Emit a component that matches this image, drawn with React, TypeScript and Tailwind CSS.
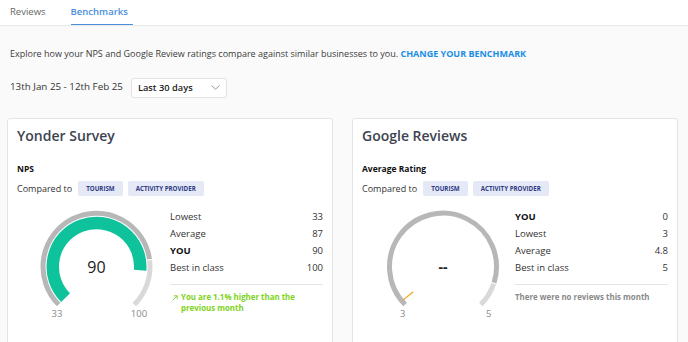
import React from 'react';

type Row = { label: string; value: string; bold?: boolean };

const polar = (cx: number, cy: number, r: number, a: number) => {
  const rad = (a * Math.PI) / 180;
  return [cx + r * Math.cos(rad), cy - r * Math.sin(rad)];
};

// clockwise arc from angle a1 down to a2 (degrees, 0 = right, counter-clockwise positive)
const arc = (cx: number, cy: number, r: number, a1: number, a2: number) => {
  const [x1, y1] = polar(cx, cy, r, a1);
  const [x2, y2] = polar(cx, cy, r, a2);
  const large = a1 - a2 > 180 ? 1 : 0;
  return `M ${x1} ${y1} A ${r} ${r} 0 ${large} 1 ${x2} ${y2}`;
};

const START = 225;
const SWEEP = 270;

const Gauge = ({
  cx,
  min,
  max,
  avg,
  value,
  display,
  minX,
  maxX,
}: {
  cx: number;
  min: number;
  max: number;
  avg: number;
  value: number | null;
  display: string;
  minX: number;
  maxX: number;
}) => {
  const cy = 58.7;
  const angle = (v: number) => START - ((v - min) / (max - min)) * SWEEP;
  const avgA = angle(avg);
  return (
    <svg width="143" height="114" viewBox="0 0 143 114" className="block">
      <path d={arc(cx, cy, 53.5, START, avgA + 0.6)} fill="none" stroke="#b7b7b7" strokeWidth="5" />
      <path d={arc(cx, cy, 53.5, avgA - 0.6, START - SWEEP)} fill="none" stroke="#d9d9d9" strokeWidth="5" />
      {value !== null ? (
        <path d={arc(cx, cy, 43.75, START, angle(value))} fill="none" stroke="#0ec39c" strokeWidth="12.5" />
      ) : (
        (() => {
          const [x1, y1] = polar(cx, cy, 39, 220);
          const [x2, y2] = polar(cx, cy, 52, 220);
          return <line x1={x1} y1={y1} x2={x2} y2={y2} stroke="#f5a623" strokeWidth="1.3" />;
        })()
      )}
      <text
        x={cx}
        y={value !== null ? 65 : 64}
        textAnchor="middle"
        fontSize={value !== null ? 16 : 14}
        fontWeight={value !== null ? 400 : 700}
        fill="#222"
        fontFamily="'Open Sans', sans-serif"
      >
        {display}
      </text>
      <text x={minX} y={108.5} textAnchor="middle" fontSize="9.5" fill="#8a8a8a" fontFamily="'Open Sans', sans-serif">
        {min}
      </text>
      <text x={maxX} y={108.5} textAnchor="middle" fontSize="9.5" fill="#8a8a8a" fontFamily="'Open Sans', sans-serif">
        {max}
      </text>
    </svg>
  );
};

const Tag = ({ children }: { children: React.ReactNode }) => (
  <span className="h-[15px] px-[8px] flex items-center rounded-[2px] bg-[#e5e8f5] text-[6.2px] font-bold text-[#2e3b86]">
    {children}
  </span>
);

const Stats = ({ rows, footer }: { rows: Row[]; footer: React.ReactNode }) => (
  <div className="w-[153px] ml-[10px]">
    {rows.map((r) => (
      <div key={r.label} className="flex justify-between text-[9.5px] leading-[17px] text-[#333]">
        <span className={r.bold ? 'font-bold text-[#111]' : ''}>{r.label}</span>
        <span>{r.value}</span>
      </div>
    ))}
    <div className="mt-[8px] border-t border-[#e3e5ea]" />
    <div className="mt-[7px]">{footer}</div>
  </div>
);

const Card = ({
  title,
  metric,
  gauge,
  rows,
  footer,
}: {
  title: string;
  metric: string;
  gauge: React.ReactNode;
  rows: Row[];
  footer: React.ReactNode;
}) => (
  <div className="w-[326px] h-[240px] bg-white border border-[#e4e4e4] rounded-[3px] px-[9px] pt-[9px]">
    <div className="text-[14px] leading-[16px] font-semibold text-[#3d4350]">{title}</div>
    <div className="mt-[20px] text-[8.5px] leading-[10px] font-bold text-[#111]">{metric}</div>
    <div className="mt-[7px] flex items-center gap-[5px] h-[15px]">
      <span className="text-[9px] text-[#333] mr-[1px]">Compared to</span>
      <Tag>TOURISM</Tag>
      <Tag>ACTIVITY PROVIDER</Tag>
    </div>
    <div className="mt-[12px] flex">
      <div className="w-[143px]">{gauge}</div>
      <Stats rows={rows} footer={footer} />
    </div>
  </div>
);

const App = () => {
  return (
    <div className="w-[688px] h-[342px] overflow-hidden bg-[#fafafa] font-['Open_Sans',sans-serif]">
      {/* Tabs */}
      <div className="h-[26px] bg-white border-b border-[#e8e8e8] flex items-end pl-[10px]">
        <div className="h-[25px] flex items-center text-[9.5px] text-[#666]">Reviews</div>
        <div className="ml-[25px] h-[25px] pr-[5px] flex items-center text-[9.5px] font-semibold text-[#4a8fdc] border-b border-[#4a8fdc]">
          Benchmarks
        </div>
      </div>

      <div className="pl-[10px] pt-[22px] text-[9px] leading-[12px] text-[#3a3a3a]">
        Explore how your NPS and Google Review ratings compare against similar businesses to you.{' '}
        <span className="font-bold text-[#1a8ee6]">CHANGE YOUR BENCHMARK</span>
      </div>

      <div className="mt-[17.5px] pl-[10px] flex items-center h-[20px]">
        <span className="text-[9.8px] text-[#333]">13th Jan 25 - 12th Feb 25</span>
        <div className="ml-[8px] w-[96px] h-[20px] bg-white border border-[#e2e2e2] rounded-[3px] flex items-center justify-between pl-[6px] pr-[6px]">
          <span className="text-[9.3px] font-semibold text-[#222]">Last 30 days</span>
          <svg width="9" height="5" viewBox="0 0 9 5">
            <polyline points="0.5,0.5 4.5,4.2 8.5,0.5" fill="none" stroke="#8c8c8c" strokeWidth="0.9" />
          </svg>
        </div>
      </div>

      <div className="mt-[20.5px] pl-[7px] flex gap-[19px]">
        <Card
          title="Yonder Survey"
          metric="NPS"
          gauge={<Gauge cx={79.5} min={33} max={100} avg={87} value={90} display="90" minX={40} maxX={122} />}
          rows={[
            { label: 'Lowest', value: '33' },
            { label: 'Average', value: '87' },
            { label: 'YOU', value: '90', bold: true },
            { label: 'Best in class', value: '100' },
          ]}
          footer={
            <div className="flex text-[7.9px] leading-[11px] font-bold text-[#7ed321]">
              <svg width="6" height="6" viewBox="0 0 6 6" className="mt-[3px] ml-[2px] mr-[3px] shrink-0">
                <path d="M0.6 5.4 L5.2 0.8 M1.8 0.8 H5.2 V4.2" fill="none" stroke="#7ed321" strokeWidth="0.9" />
              </svg>
              <span>You are 1.1% higher than the previous month</span>
            </div>
          }
        />
        <Card
          title="Google Reviews"
          metric="Average Rating"
          gauge={<Gauge cx={81} min={3} max={5} avg={4.8} value={null} display="--" minX={40.7} maxX={126.7} />}
          rows={[
            { label: 'YOU', value: '0', bold: true },
            { label: 'Lowest', value: '3' },
            { label: 'Average', value: '4.8' },
            { label: 'Best in class', value: '5' },
          ]}
          footer={<div className="text-[7.9px] leading-[11px] font-bold text-[#8a8a8a]">There were no reviews this month</div>}
        />
      </div>
    </div>
  );
};

export default App;
